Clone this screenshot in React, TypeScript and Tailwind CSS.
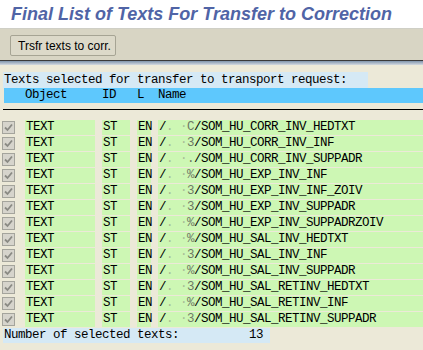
import React from "react";

const names = [
  ["C", "SOM_HU_CORR_INV_HEDTXT"],
  ["3", "SOM_HU_CORR_INV_INF"],
  [".", "SOM_HU_CORR_INV_SUPPADR"],
  ["%", "SOM_HU_EXP_INV_INF"],
  ["3", "SOM_HU_EXP_INV_INF_ZOIV"],
  ["3", "SOM_HU_EXP_INV_SUPPADR"],
  ["%", "SOM_HU_EXP_INV_SUPPADRZOIV"],
  ["%", "SOM_HU_SAL_INV_HEDTXT"],
  ["3", "SOM_HU_SAL_INV_INF"],
  ["%", "SOM_HU_SAL_INV_SUPPADR"],
  ["3", "SOM_HU_SAL_RETINV_HEDTXT"],
  ["%", "SOM_HU_SAL_RETINV_INF"],
  ["3", "SOM_HU_SAL_RETINV_SUPPADR"],
];

const mono = "font-['Liberation_Mono',monospace] text-[12.5px] tracking-[-0.5px] leading-[15px] whitespace-pre";

function Check() {
  return (
    <span className="ml-[2px] mt-[1px] flex h-[13px] w-[13px] shrink-0 items-center justify-center border border-[#a4a49c] bg-[#d6d4cc]">
      <svg width="9" height="9" viewBox="0 0 9 9">
        <path d="M1 4.5 L3.5 7 L8 1.5" fill="none" stroke="#8a8a84" strokeWidth="1.8" />
      </svg>
    </span>
  );
}

export default function App() {
  return (
    <div className="h-[350px] w-[423px] overflow-hidden bg-[#ece9d8] font-['Liberation_Sans',Arial,sans-serif]">
      <div className="flex h-[28px] items-center bg-white pl-[11px]">
        <span className="text-[18px] font-bold italic leading-none text-[#5064a6]">
          Final List of Texts For Transfer to Correction
        </span>
      </div>
      <div className="h-[1px] bg-[#cfcfc6]" />
      <div className="h-[31px] bg-[#d8d5c4] pl-[10px] pt-[6px]">
        <div className="flex h-[21px] w-[106px] items-center rounded-[2px] border border-[#a6a494] bg-[#dcd9c9] pl-[7px] text-[12px] text-black">
          Trsfr texts to corr.
        </div>
      </div>
      <div className="h-[1px] bg-[#3a3a3a]" />
      <div className="h-[4px] bg-gradient-to-b from-[#7f94ac] to-[#d4dae0]" />
      <div className="pt-[7px]">
        <div className={`${mono} ml-[3px] h-[16px] w-[365px] bg-[#d5e9f5] pl-[1px] leading-[16px] text-black`}>
          Texts selected for transfer to transport request:
        </div>
        <div className={`${mono} ml-[4px] flex h-[15px] bg-[#5ec8fd] text-black`}>
          <span className="ml-[21px] w-[77px]">Object</span>
          <span className="w-[35px]">ID</span>
          <span className="w-[21px]">L</span>
          <span>Name</span>
        </div>
        <div className="ml-[3px] mt-[6px] h-[1px] bg-black" />
        <div className="mt-[10px] flex flex-col gap-[1px]">
          {names.map(([c, n], i) => (
            <div key={i} className={`${mono} flex h-[15px] text-black`}>
              <Check />
              <span className="ml-[10px] w-[70px] bg-[#cdf7b4] pl-[1px]">TEXT</span>
              <span className="ml-[7px] w-[28px] bg-[#cdf7b4] pl-[1px]">ST</span>
              <span className="ml-[7px] w-[14px] bg-[#cdf7b4] pl-[1px]">EN</span>
              <span className="ml-[7px] flex-1 bg-[#cdf7b4] pl-[1px]">
                /<span className="text-[#a9bd98]">. ·</span>
                <span className="text-[#6f7a66]">{c}</span>/{n}
              </span>
            </div>
          ))}
        </div>
        <div className={`${mono} ml-[3px] mt-[1px] h-[15px] w-[267px] bg-[#d5e9f5] pl-[1px] text-black`}>
          {"Number of selected texts:          13"}
        </div>
      </div>
    </div>
  );
}
